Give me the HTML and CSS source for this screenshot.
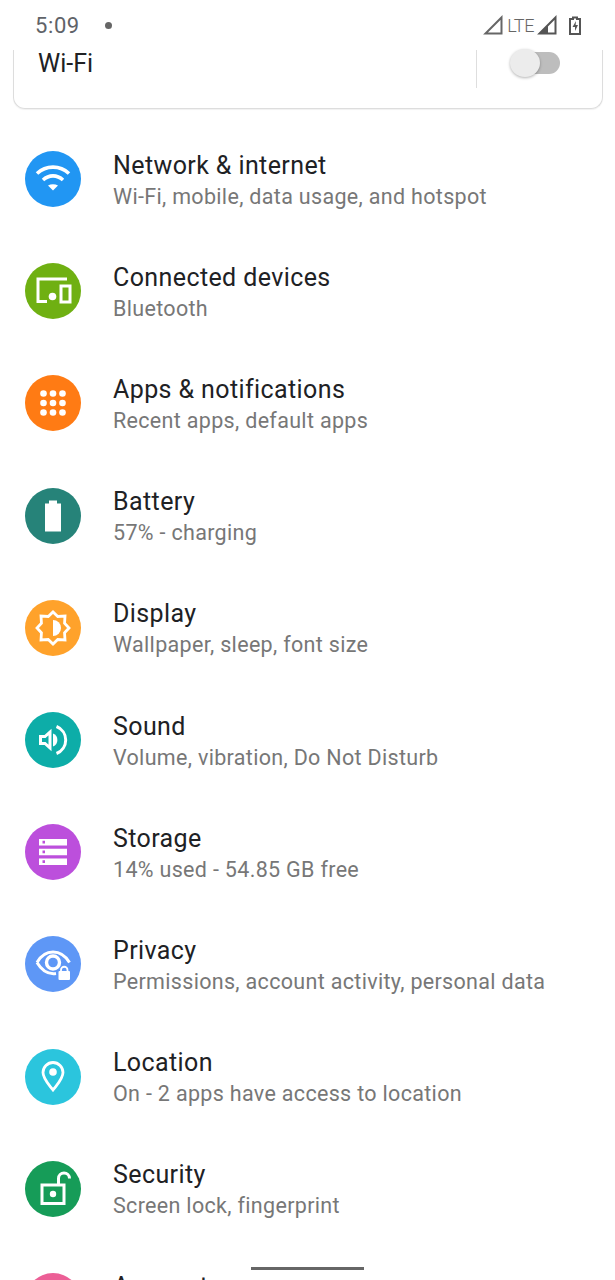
FILE: index.html
```html
<!DOCTYPE html>
<html lang="en">
<head>
    <meta charset="UTF-8">
    <meta name="viewport" content="width=device-width, initial-scale=1.0">
    <title>Settings</title>
    <link rel="stylesheet" href="styles.css">
</head>
<body>
    <div class="screen">
        <div class="status-bar">
            <span class="time">5:09</span>
            <span class="notif-dot"></span>
            <div class="status-icons">
                <svg class="sig" width="20" height="20" viewBox="0 0 20 20"><path d="M18.5 2.5V18.5H2.5Z" fill="none" stroke="#666" stroke-width="2"/></svg>
                <span class="lte">LTE</span>
                <svg class="sig" width="20" height="20" viewBox="0 0 20 20"><path d="M18.5 2.5V18.5H2.5Z" fill="none" stroke="#555" stroke-width="2"/><path d="M11 10V18H3Z" fill="#555"/></svg>
                <svg class="batt" width="12" height="19" viewBox="0 0 12 19"><path d="M4 1.5h4v1.5h3v15H1V3h3Z" fill="none" stroke="#555" stroke-width="2"/><path d="M7 5L3.5 11H6v4l3-6H6.6Z" fill="#555"/></svg>
            </div>
        </div>

        <div class="wifi-card">
            <span class="wifi-label">Wi-Fi</span>
            <div class="wifi-toggle">
                <div class="switch">
                    <div class="switch-track"></div>
                    <div class="switch-thumb"></div>
                </div>
            </div>
        </div>

        <div class="settings-list">
            <div class="row">
                <svg class="icon blue" viewBox="0 0 56 56"><path d="M12 22.5C21 14 35 14 44 22.5" class="ln" stroke-width="3.6"/><path d="M18 29C24 23.5 32 23.5 38 29" class="ln" stroke-width="3.6"/><path d="M23 34.5C26 32.8 30 32.8 33 34.5L28 39.5Z" class="fl"/></svg>
                <div class="row-text">
                    <div class="row-title">Network &amp; internet</div>
                    <div class="row-sub">Wi-Fi, mobile, data usage, and hotspot</div>
                </div>
            </div>
            <div class="row">
                <svg class="icon green" viewBox="0 0 56 56"><path d="M42 16H13V38.500H22" class="ln" stroke-width="3"/><circle cx="27.500" cy="33.500" r="3.800" class="fl"/><rect x="36" y="23" width="9" height="16" class="ln" stroke-width="3"/></svg>
                <div class="row-text">
                    <div class="row-title">Connected devices</div>
                    <div class="row-sub">Bluetooth</div>
                </div>
            </div>
            <div class="row">
                <svg class="icon orange" viewBox="0 0 56 56"><g class="fl"><circle cx="18.500" cy="18.500" r="3.300"/><circle cx="28" cy="18.500" r="3.300"/><circle cx="37.500" cy="18.500" r="3.300"/><circle cx="18.500" cy="28" r="3.300"/><circle cx="28" cy="28" r="3.300"/><circle cx="37.500" cy="28" r="3.300"/><circle cx="18.500" cy="37.500" r="3.300"/><circle cx="28" cy="37.500" r="3.300"/><circle cx="37.500" cy="37.500" r="3.300"/></g></svg>
                <div class="row-text">
                    <div class="row-title">Apps &amp; notifications</div>
                    <div class="row-sub">Recent apps, default apps</div>
                </div>
            </div>
            <div class="row">
                <svg class="icon teal" viewBox="0 0 56 56"><path d="M24 12.500H32V15.500H36V43.500H20V15.500H24Z" class="fl"/></svg>
                <div class="row-text">
                    <div class="row-title">Battery</div>
                    <div class="row-sub">57% - charging</div>
                </div>
            </div>
            <div class="row">
                <svg class="icon amber" viewBox="0 0 56 56"><polygon points="44,28 39.55,32.78 40,40 32.78,39.55 28,44 23.22,39.55 16,40 16.45,32.78 12,28 16.45,23.22 16,16 23.22,16.45 28,12 32.78,16.45 40,16 39.55,23.22" class="ln" stroke-width="2.8"/><path d="M28 20a8 8 0 0 1 0 16Z" class="fl"/></svg>
                <div class="row-text">
                    <div class="row-title">Display</div>
                    <div class="row-sub">Wallpaper, sleep, font size</div>
                </div>
            </div>
            <div class="row">
                <svg class="icon sea" viewBox="0 0 56 56"><path d="M15.500 24.500H20L25 20V36L20 31.500H15.500Z" class="ln" stroke-width="3"/><path d="M28 21.500a7 7 0 0 1 0 13Z" class="fl"/><path d="M31.500 14.500a14.500 14.500 0 0 1 0 27" class="ln" stroke-width="3"/></svg>
                <div class="row-text">
                    <div class="row-title">Sound</div>
                    <div class="row-sub">Volume, vibration, Do Not Disturb</div>
                </div>
            </div>
            <div class="row">
                <svg class="icon purple" viewBox="0 0 56 56"><path d="M14 15H42V21.500H14ZM14 24.800H42V31.200H14ZM14 34.500H42V41H14Z" class="fl"/><path d="M17.500 16.800H20V19.500H17.500ZM17.500 26.500H20V29.200H17.500ZM17.500 36.300H20V39H17.500Z" fill="#bc4fdc"/></svg>
                <div class="row-text">
                    <div class="row-title">Storage</div>
                    <div class="row-sub">14% used - 54.85 GB free</div>
                </div>
            </div>
            <div class="row">
                <svg class="icon periwinkle" viewBox="0 0 56 56"><path d="M12 26.500C20 12.500 36 12.500 44.500 26.500" class="ln" stroke-width="3"/><path d="M12 26.500C17 35 24 38.500 31 37.500" class="ln" stroke-width="3"/><circle cx="28" cy="26.500" r="6.500" class="ln" stroke-width="3.400"/><rect x="33.500" y="35" width="11.500" height="9" rx="1" class="fl"/><path d="M36 35.500v-1.500a3.200 3.200 0 0 1 6.500 0v1.500" class="ln" stroke-width="1.800"/></svg>
                <div class="row-text">
                    <div class="row-title">Privacy</div>
                    <div class="row-sub">Permissions, account activity, personal data</div>
                </div>
            </div>
            <div class="row">
                <svg class="icon cyan" viewBox="0 0 56 56"><path d="M28 41C23 34.500 18 29.500 18 23.500a10 10 0 0 1 20 0C38 29.500 33 34.500 28 41Z" class="ln" stroke-width="2.800"/><circle cx="28" cy="23" r="3.800" class="fl"/></svg>
                <div class="row-text">
                    <div class="row-title">Location</div>
                    <div class="row-sub">On - 2 apps have access to location</div>
                </div>
            </div>
            <div class="row">
                <svg class="icon forest" viewBox="0 0 56 56"><rect x="17" y="24" width="22" height="18.500" class="ln" stroke-width="3"/><circle cx="28" cy="33" r="3.200" class="fl"/><path d="M33.500 24V17.500a5.500 5.500 0 0 1 11 0" class="ln" stroke-width="3"/></svg>
                <div class="row-text">
                    <div class="row-title">Security</div>
                    <div class="row-sub">Screen lock, fingerprint</div>
                </div>
            </div>
            <div class="row">
                <svg class="icon pink" viewBox="0 0 56 56"></svg>
                <div class="row-text">
                    <div class="row-title">Accounts</div>
                </div>
            </div>
        </div>

        <div class="home-bar"></div>
    </div>
</body>
</html>
```

FILE: styles.css
```css
body {
    margin: 0;
    background: #fff;
    font-family: Roboto, "Noto Sans", sans-serif;
}
.screen {
    position: relative;
    width: 615px;
    height: 1280px;
    overflow: hidden;
    background: #fff;
}
.status-bar {
    display: flex;
    align-items: center;
    height: 50px;
    padding: 0 34px 0 35px;
    color: #5f6368;
}
.time {
    font-size: 22px;
    letter-spacing: 0.6px;
}
.notif-dot {
    width: 7px;
    height: 7px;
    margin-left: 25px;
    border-radius: 50%;
    background: #666;
}
.status-icons {
    display: flex;
    align-items: center;
    margin-left: auto;
}
.lte {
    margin: 0 3px 0 4px;
    font-size: 18px;
    font-weight: 300;
    color: #666;
    letter-spacing: -0.4px;
}
.batt {
    margin-left: 12px;
}
.wifi-card {
    display: flex;
    align-items: stretch;
    box-sizing: border-box;
    height: 59px;
    margin: 0 12px 0 13px;
    border: 1px solid #ddd;
    border-top: none;
    border-radius: 0 0 12px 12px;
    box-shadow: 0 1px 1px rgba(0, 0, 0, 0.06);
}
.wifi-label {
    padding: 0 0 0 24px;
    font-size: 25px;
    line-height: 27px;
    color: #202124;
}
.wifi-toggle {
    display: flex;
    justify-content: center;
    width: 125px;
    height: 38px;
    margin-left: auto;
    border-left: 1px solid #dedede;
}
.switch {
    position: relative;
    width: 50px;
    height: 38px;
    margin-right: 10px;
}
.switch-track {
    position: absolute;
    top: 2px;
    right: 0;
    width: 42px;
    height: 22px;
    border-radius: 11px;
    background: #bdbdbd;
}
.switch-thumb {
    position: absolute;
    top: -1px;
    left: 0;
    width: 30px;
    height: 28px;
    border-radius: 50%;
    background: #ececec;
    box-shadow: 0 1px 3px rgba(0, 0, 0, 0.3);
}
.settings-list {
    padding-top: 14px;
}
.row {
    display: flex;
    align-items: center;
    height: 112.2px;
    padding-left: 25px;
}
.icon {
    flex: none;
    width: 56px;
    height: 56px;
    margin-right: 32px;
    border-radius: 50%;
}
.ln {
    fill: none;
    stroke: #fff;
}
.fl {
    fill: #fff;
}
.blue { background: #2196f3; }
.green { background: #6fb012; }
.orange { background: #ff7b14; }
.teal { background: #268379; }
.amber { background: #ffa22b; }
.sea { background: #0dada8; }
.purple { background: #bc4fdc; }
.periwinkle { background: #5e97f6; }
.cyan { background: #2bc5dd; }
.forest { background: #169c58; }
.pink { background: #ec5f96; }
.row-text {
    min-height: 63px;
}
.row-title {
    font-size: 25px;
    line-height: 35px;
    letter-spacing: 0.4px;
    color: #202124;
}
.row-sub {
    font-size: 21.5px;
    line-height: 28px;
    letter-spacing: 0.32px;
    color: #777;
}
.home-bar {
    position: absolute;
    left: 251px;
    top: 1267px;
    width: 113px;
    height: 3px;
    background: #666;
}
```
